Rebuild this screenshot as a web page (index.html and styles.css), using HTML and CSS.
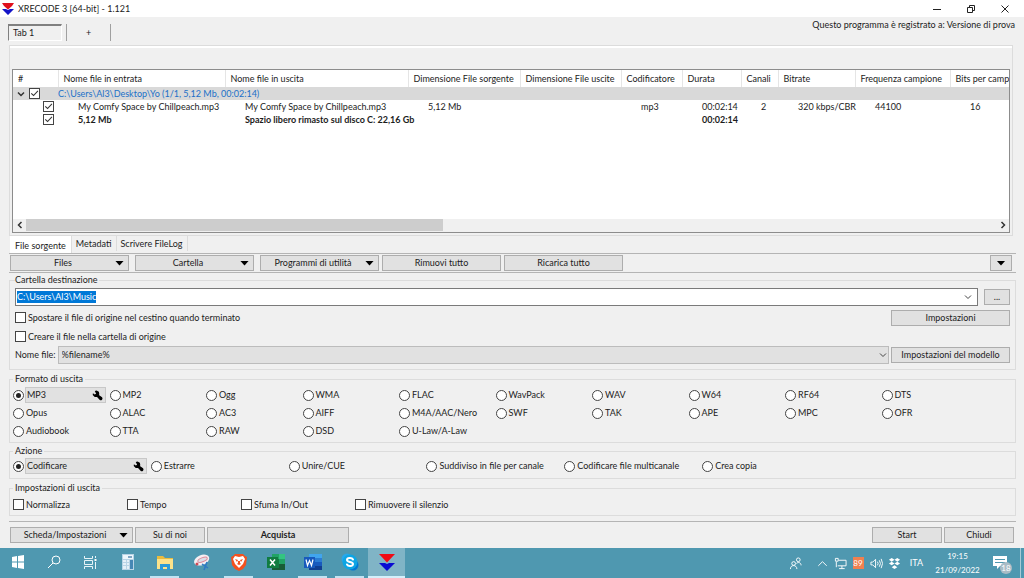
FILE: index.html
```
<!DOCTYPE html>
<html lang="it">
<head>
<meta charset="utf-8">
<title>XRECODE 3 [64-bit] - 1.121</title>
<link rel="stylesheet" href="styles.css">
</head>
<body>
<header class="titlebar">
  <svg class="app-logo" viewBox="0 0 12 12" aria-hidden="true"><path fill="#e0101c" d="M0 0h12L10 3 6 6.500 2 3z"/><path fill="#1414c8" d="M0 6h4l2 1 2-1h4l-6 6z"/></svg>
  <h1 class="title">XRECODE 3 [64-bit] - 1.121</h1>
  <div class="window-controls">
    <button aria-label="Riduci a icona"><svg viewBox="0 0 10 10"><path d="M1 5.500h8"/></svg></button>
    <button aria-label="Ripristina"><svg viewBox="0 0 10 10"><path d="M1.500 3.500h5v5h-5zM3.500 3.500v-2h5v5h-2"/></svg></button>
    <button aria-label="Chiudi finestra"><svg viewBox="0 0 10 10"><path d="M1.500 1.500l7 7M8.500 1.500l-7 7"/></svg></button>
  </div>
</header>

<main class="app">
  <div class="session-bar">
    <button class="session-tab">Tab 1</button>
    <button class="session-add" aria-label="Nuova scheda">+</button>
    <p class="license">Questo programma è registrato a: Versione di prova</p>
  </div>

  <section class="file-panel">
    <div class="file-list">
      <div class="table-clip">
        <table class="files">
          <colgroup><col class="c-num"><col class="c-in"><col class="c-out"><col class="c-src"><col class="c-dst"><col class="c-codec"><col class="c-dur"><col class="c-ch"><col class="c-rate"><col class="c-freq"><col class="c-bits"></colgroup>
          <thead>
            <tr><th>#</th><th>Nome file in entrata</th><th>Nome file in uscita</th><th>Dimensione File sorgente</th><th>Dimensione File uscite</th><th>Codificatore</th><th>Durata</th><th>Canali</th><th>Bitrate</th><th>Frequenza campione</th><th>Bits per camp</th></tr>
          </thead>
          <tbody>
            <tr class="group-row">
              <td class="pick"><span class="pick-line"><svg class="expander" viewBox="0 0 8 8"><path d="M1 2.500l3 3 3-3"/></svg><input type="checkbox" checked aria-label="Seleziona cartella"></span></td>
              <td class="folder" colspan="10">C:\Users\Al3\Desktop\Yo (1/1, 5,12 Mb, 00:02:14)</td>
            </tr>
            <tr>
              <td class="pick"><span class="pick-line nested"><input type="checkbox" checked aria-label="Seleziona file"></span></td>
              <td>My Comfy Space by Chillpeach.mp3</td><td>My Comfy Space by Chillpeach.mp3</td><td>5,12 Mb</td><td></td><td>mp3</td><td>00:02:14</td><td>2</td><td>320 kbps/CBR</td><td>44100</td><td>16</td>
            </tr>
            <tr class="total-row">
              <td class="pick"><span class="pick-line nested"><input type="checkbox" checked aria-label="Seleziona totale"></span></td>
              <td>5,12 Mb</td><td>Spazio libero rimasto sul disco C: 22,16 Gb</td><td></td><td></td><td></td><td>00:02:14</td><td></td><td></td><td></td><td></td>
            </tr>
          </tbody>
        </table>
      </div>
      <div class="scrollbar">
        <button aria-label="Scorri a sinistra"><svg viewBox="0 0 8 8"><path d="M5.500 1l-3 3 3 3"/></svg></button>
        <div class="track"><div class="thumb"></div></div>
        <button aria-label="Scorri a destra"><svg viewBox="0 0 8 8"><path d="M2.500 1l3 3-3 3"/></svg></button>
      </div>
    </div>
  </section>

  <nav class="view-tabs">
    <button class="active">File sorgente</button>
    <button>Metadati</button>
    <button>Scrivere FileLog</button>
  </nav>

  <div class="toolbar">
    <button class="btn drop wide spaced"><span>Files</span><i class="caret"></i></button>
    <button class="btn drop wide spaced"><span>Cartella</span><i class="caret"></i></button>
    <button class="btn drop wide"><span>Programmi di utilità</span><i class="caret"></i></button>
    <button class="btn wide">Rimuovi tutto</button>
    <button class="btn wide">Ricarica tutto</button>
    <button class="btn more" aria-label="Altro"><i class="caret"></i></button>
  </div>

  <fieldset class="group destination">
    <legend>Cartella destinazione</legend>
    <div class="line path-line">
      <div class="combo">
        <input type="text" class="path" value="C:\Users\Al3\Music" aria-label="Cartella destinazione">
        <button aria-label="Mostra cartelle"><svg class="chevron" viewBox="0 0 8 8"><path d="M1 2.500l3 3 3-3"/></svg></button>
      </div>
      <button class="btn browse">...</button>
    </div>
    <div class="line">
      <label class="choice"><input type="checkbox">Spostare il file di origine nel cestino quando terminato</label>
      <button class="btn wide push">Impostazioni</button>
    </div>
    <div class="line">
      <label class="choice"><input type="checkbox">Creare il file nella cartella di origine</label>
    </div>
    <div class="line name-line">
      <label for="filename">Nome file:</label>
      <div class="select-box">
        <select id="filename"><option>%filename%</option></select>
        <svg class="chevron" viewBox="0 0 8 8"><path d="M1 2.500l3 3 3-3"/></svg>
      </div>
      <button class="btn wide">Impostazioni del modello</button>
    </div>
  </fieldset>

  <fieldset class="group formats">
    <legend>Formato di uscita</legend>
    <div class="format-grid">
      <div class="configurable"><input type="radio" name="format" id="mp3" checked><span class="config"><label for="mp3">MP3</label><button aria-label="Configura MP3"><svg viewBox="0 0 12 12"><path d="M3 1l2-.5 2.500 1.500.5 2.500-.5 1 3.500 2.500a2 2 0 0 1-2.500 3L5.500 7.500 3 7.500.8 5.500 1 3.500l2 1.500 1.500-1z"/></svg></button></span></div>
      <label class="choice"><input type="radio" name="format">MP2</label>
      <label class="choice"><input type="radio" name="format">Ogg</label>
      <label class="choice"><input type="radio" name="format">WMA</label>
      <label class="choice"><input type="radio" name="format">FLAC</label>
      <label class="choice"><input type="radio" name="format">WavPack</label>
      <label class="choice"><input type="radio" name="format">WAV</label>
      <label class="choice"><input type="radio" name="format">W64</label>
      <label class="choice"><input type="radio" name="format">RF64</label>
      <label class="choice"><input type="radio" name="format">DTS</label>
      <label class="choice"><input type="radio" name="format">Opus</label>
      <label class="choice"><input type="radio" name="format">ALAC</label>
      <label class="choice"><input type="radio" name="format">AC3</label>
      <label class="choice"><input type="radio" name="format">AIFF</label>
      <label class="choice"><input type="radio" name="format">M4A/AAC/Nero</label>
      <label class="choice"><input type="radio" name="format">SWF</label>
      <label class="choice"><input type="radio" name="format">TAK</label>
      <label class="choice"><input type="radio" name="format">APE</label>
      <label class="choice"><input type="radio" name="format">MPC</label>
      <label class="choice"><input type="radio" name="format">OFR</label>
      <label class="choice"><input type="radio" name="format">Audiobook</label>
      <label class="choice"><input type="radio" name="format">TTA</label>
      <label class="choice"><input type="radio" name="format">RAW</label>
      <label class="choice"><input type="radio" name="format">DSD</label>
      <label class="choice"><input type="radio" name="format">U-Law/A-Law</label>
    </div>
  </fieldset>

  <fieldset class="group actions">
    <legend>Azione</legend>
    <div class="action-grid">
      <div class="configurable"><input type="radio" name="action" id="encode" checked><span class="config"><label for="encode">Codificare</label><button aria-label="Configura codifica"><svg viewBox="0 0 12 12"><path d="M3 1l2-.5 2.500 1.500.5 2.500-.5 1 3.500 2.500a2 2 0 0 1-2.500 3L5.500 7.500 3 7.500.8 5.500 1 3.500l2 1.500 1.500-1z"/></svg></button></span></div>
      <label class="choice"><input type="radio" name="action">Estrarre</label>
      <label class="choice"><input type="radio" name="action">Unire/CUE</label>
      <label class="choice"><input type="radio" name="action">Suddiviso in file per canale</label>
      <label class="choice"><input type="radio" name="action">Codificare file multicanale</label>
      <label class="choice"><input type="radio" name="action">Crea copia</label>
    </div>
  </fieldset>

  <fieldset class="group output">
    <legend>Impostazioni di uscita</legend>
    <div class="output-grid">
      <label class="choice"><input type="checkbox">Normalizza</label>
      <label class="choice"><input type="checkbox">Tempo</label>
      <label class="choice"><input type="checkbox">Sfuma In/Out</label>
      <label class="choice"><input type="checkbox">Rimuovere il silenzio</label>
    </div>
  </fieldset>

  <footer class="bottom-bar">
    <button class="btn drop card"><span>Scheda/Impostazioni</span><i class="caret"></i></button>
    <button class="btn small">Su di noi</button>
    <button class="btn buy">Acquista</button>
    <button class="btn small push">Start</button>
    <button class="btn small">Chiudi</button>
  </footer>
</main>

<div class="taskbar">
  <div class="launchers">
    <button class="sys" aria-label="Start di Windows"><svg viewBox="0 0 20 20"><path fill="#fff" d="M4 5l5-1v5.500H4zM10 4l6-1v6.500h-6zM4 10.500h5V16l-5-1zM10 10.500h6V17l-6-1z"/></svg></button>
    <button class="sys" aria-label="Cerca"><svg viewBox="0 0 20 20"><g fill="none" stroke="#fff"><circle cx="12" cy="8" r="4"/><path d="M9 11l-5 5"/></g></svg></button>
    <button class="sys" aria-label="Visualizzazione attività"><svg viewBox="0 0 20 20"><path fill="none" stroke="#e8f4f8" d="M4.500 4v2.500h8V4M4.500 8.500h8v4h-8zM4.500 17v-2.500h8V17M15.500 4v2M15.500 10v7"/><path fill="#fff" d="M14.500 7h2v2h-2z"/></svg></button>
    <button aria-label="Calcolatrice"><svg viewBox="0 0 20 20"><path fill="#b8d4e6" d="M4 2h12v16H4z"/><path fill="#eef7fc" d="M5 3h10v4H5z"/><path fill="#7fa6c4" d="M10 4h4v2h-4z"/><path fill="#e4f0f8" d="M5 8h3v2H5zM9 8h2v2H9zM5 11h3v2H5zM9 11h2v2H9zM5 14h3v3H5zM9 14h2v3H9z"/><path fill="#4687b4" d="M12 8h3v9h-3z"/></svg></button>
    <button class="open" aria-label="Esplora file"><svg viewBox="0 0 20 20"><path fill="#e9bb3f" d="M2 4h6l2 2h8v11H2z"/><path fill="#fbe28a" d="M2 7h16v10H2z"/><path fill="#2b9bd7" d="M5 18v-6h10v6h-3v-3H8v3z"/></svg></button>
    <button aria-label="Strumento di cattura"><svg viewBox="0 0 20 20"><g transform="rotate(-22 10 9)"><ellipse cx="10" cy="8" rx="8" ry="5" fill="#f5eef2"/><ellipse cx="11" cy="8" rx="5" ry="2" fill="#d9dfe8" stroke="#dd8b9a"/></g><path fill="none" stroke="#2f79c4" stroke-width="1.500" d="M10 12l6 4M15 10l-3 8"/><circle cx="5" cy="12" r="1.500" fill="#cf4b55"/></svg></button>
    <button class="open" aria-label="Brave"><svg viewBox="0 0 20 20"><path fill="#f4511e" d="M6 2h8l2 2 2 1-1 8-3 4-4 2-4-2-3-4-1-8 2-1z"/><path fill="#fff" d="M6 4l4 1 4-1 2 3-2 5-4 4-4-4-2-5z"/><path fill="#f4511e" d="M6 7l3 1-1 2zM14 7l-3 1 1 2zM9 9h2v2l1 1-2 1-2-1 1-1z"/></svg></button>
    <button aria-label="Excel"><svg viewBox="0 0 20 20"><path fill="#21a366" d="M6 2h13v16H6z"/><path fill="#107c41" d="M6 7h7v11H6z"/><path fill="#33c481" d="M13 2h6v5h-6z"/><path fill="#185c37" d="M13 12h6v6H6v-2h7z"/><path fill="#107c41" d="M1 5h11v11H1z"/><path stroke="#fff" stroke-width="1.500" d="M4 7.500l5 6M9 7.500l-5 6"/></svg></button>
    <button class="open" aria-label="Word"><svg viewBox="0 0 20 20"><path fill="#41a5ee" d="M6 2h13v4H6z"/><path fill="#2b7cd3" d="M6 6h13v4H6z"/><path fill="#185abd" d="M6 10h13v4H6z"/><path fill="#103f91" d="M6 14h13v4H6z"/><path fill="#185abd" d="M1 5h11v11H1z"/><path fill="none" stroke="#fff" stroke-width="1.200" d="M3 7.500l1.500 6 2-5 2 5 1.500-6"/></svg></button>
    <button class="open" aria-label="Skype"><svg viewBox="0 0 20 20"><circle cx="7" cy="7" r="5.500" fill="#28a8ea"/><circle cx="13" cy="13" r="5.500" fill="#0078d4"/><circle cx="10" cy="10" r="7.500" fill="#0ea5e4"/><path fill="none" stroke="#fff" stroke-width="2" stroke-linecap="round" d="M13 7.500C12 5.500 7 5.500 7 8c0 2.500 6 1.500 6 4 0 2.500-5 2.500-6 .5"/></svg></button>
    <button class="open current" aria-label="XRECODE 3"><svg viewBox="0 0 20 20"><path fill="#f00a14" d="M2 2h16l-8 8.500z"/><path fill="#0a0ad2" d="M2 11h6l2 1 2-1h6l-8 8z"/></svg></button>
  </div>
  <div class="tray">
    <button class="people" aria-label="Contatti"><svg viewBox="0 0 14 14"><g fill="none" stroke="#fff"><circle cx="5" cy="7" r="2"/><path d="M1.500 13c0-5 7-5 7 0"/><circle cx="10" cy="3" r="2"/><path d="M8 7c2-2 5-1 5 2"/></g></svg></button>
    <button aria-label="Icone nascoste"><svg viewBox="0 0 14 14"><path fill="none" stroke="#fff" d="M2.500 9.500l4.500-4.500 4.500 4.500"/></svg></button>
    <button aria-label="Rete"><svg viewBox="0 0 14 14"><path fill="none" stroke="#fff" d="M5 3.500h8v6H4M8.500 9.500v3M5.500 12.500h6M1.500 1.500h3v3h-3zM2.500 5v6"/></svg></button>
    <button aria-label="Notifiche app"><span class="count">89</span></button>
    <button aria-label="Volume"><svg viewBox="0 0 14 14"><path fill="none" stroke="#fff" d="M1 5.500h2l3-3v9l-3-3H1zM8 5q1.500 2 0 4M10 3.500q2.500 3.500 0 7M12 2q3 5 0 10"/></svg></button>
    <button aria-label="Dropbox"><svg viewBox="0 0 14 14"><path fill="#fff" d="M4 1l3 2-3 2-3-2zM10 1l3 2-3 2-3-2zM4 5l3 2-3 2-3-2zM10 5l3 2-3 2-3-2zM7 9l3 2-3 2-3-2z"/></svg></button>
    <button class="lang">ITA</button>
    <button class="clock"><span>19:15</span><span>21/09/2022</span></button>
    <button class="notify" aria-label="Centro notifiche"><svg viewBox="0 0 14 14"><path fill="#fff" d="M0 0h14v10H7l-3 3v-3H0z"/><path stroke="#4f98b0" d="M2 3.500h10M2 6.500h10"/></svg><span class="badge">18</span></button>
    <button class="peek" aria-label="Mostra desktop"></button>
  </div>
</div>
</body>
</html>
```
FILE: styles.css
```
:root {
  --face: #f0f0f0;
  --button: #e1e1e1;
  --line: #adadad;
  --soft-line: #dcdcdc;
  --ink: #1c1c1c;
  --taskbar: #4f98b0;
}

* { box-sizing: border-box; }

body {
  margin: 0;
  min-height: 100vh;
  display: flex;
  flex-direction: column;
  background: var(--face);
  color: var(--ink);
  font: 9px/12px Lato, "Open Sans", sans-serif;
}

button, input, select { font: inherit; color: inherit; margin: 0; }
button { padding: 0; border: 0; background: none; white-space: nowrap; }
svg { display: block; }

/* Title bar */
.titlebar { display: flex; align-items: center; height: 17px; padding: 0 2px; background: #fff; }
.app-logo { width: 12px; height: 12px; }
.title { margin: 0 0 0 4px; font-size: 9px; font-weight: 400; }
.window-controls { display: flex; margin-left: auto; }
.window-controls button { width: 34px; height: 16px; display: grid; place-items: center; }
.window-controls svg { width: 10px; height: 10px; fill: none; stroke: #222; }

/* Main area */
.app { flex: 1; display: flex; flex-direction: column; padding: 0 9px; }

.session-bar { display: flex; align-items: flex-start; height: 28px; padding-top: 7px; margin-left: -1px; }
.session-tab {
  width: 54px; height: 17px; padding-left: 4px; text-align: left;
  border: 1px solid #fff; border-top: 2px solid #808080; border-left: 1px solid #808080;
}
.session-add { width: 45px; height: 17px; margin-left: 4px; border: solid #a0a0a0; border-width: 0 1px; }
.license { margin: -5px 0 0 auto; }

.file-panel { margin-right: 2px; padding: 2px; border: 1px solid var(--soft-line); background: linear-gradient(#fff, #fff) top / 100% 2px no-repeat; }
.file-list { margin-top: 21px; border: 1px solid #8c8c8c; background: #fff; }
.table-clip { height: 149px; overflow: hidden; }
.files { width: 1086px; table-layout: fixed; border-collapse: collapse; white-space: nowrap; }
.c-num { width: 45px; }
.c-in { width: 167px; }
.c-out { width: 183px; }
.c-src { width: 112px; }
.c-dst { width: 101px; }
.c-codec { width: 61px; }
.c-dur { width: 59px; }
.c-ch { width: 37px; }
.c-rate { width: 77px; }
.c-freq { width: 95px; }
.c-bits { width: 149px; }
.files th { height: 17px; padding: 0 0 0 5px; border-right: 1px solid #e5e5e5; text-align: left; font-weight: 400; }
.files td { height: 13px; padding: 0 0 0 20px; line-height: 13px; overflow: visible; }
.files .pick { padding: 0; }
.files .folder { padding-left: 0; color: #2070c8; }
.group-row { background: #d9d9d9; }
.total-row { font-weight: 700; }
.pick-line { display: flex; align-items: center; gap: 4px; padding-left: 4px; }
.pick-line.nested { padding-left: 30px; }
.expander { width: 8px; height: 8px; fill: none; stroke: #333; stroke-width: 1.5; }

.scrollbar { display: flex; height: 13px; padding-bottom: 1px; background: var(--face); }
.scrollbar button { width: 13px; display: grid; place-items: center; }
.scrollbar svg { width: 8px; height: 8px; fill: none; stroke: #333; stroke-width: 1.5; }
.track { flex: 1; }
.thumb { width: 43%; height: 12px; background: #cdcdcd; }

.view-tabs { display: flex; align-items: flex-start; height: 17px; padding-left: 1px; }
.view-tabs button { height: 15px; padding: 0 4px; border: 1px solid var(--soft-line); border-width: 0 1px 0 0; }
.view-tabs .active { height: 17px; padding: 2px 5px 0; background: #fff; }

/* Buttons */
.btn { height: 16px; border: 1px solid var(--line); background: var(--button); text-align: center; }
.wide { width: 119px; }
.small { width: 70px; }
.push { margin-left: auto; }
.drop { display: flex; align-items: center; padding-right: 4px; }
.drop span { flex: 1; }
.caret { display: block; width: 9px; height: 5px; background: #000; clip-path: polygon(0 0, 100% 0, 50% 100%); }

.toolbar {
  display: flex; align-items: center; gap: 3px; height: 20px; margin-right: -1px; padding: 0 4px 0 1px;
  border: solid #b4b4b4; border-width: 1px 0;
}
.spaced { margin-right: 3px; }
.more { width: 22px; margin-left: auto; display: grid; place-items: center; }

/* Option groups */
.group { min-width: 0; margin: 1px -1px 0 0; padding: 0 5px; border: 1px solid var(--soft-line); }
.group legend { height: 12px; padding: 0 2px; }
.destination { padding-bottom: 5px; }
.destination legend { padding: 0 1px 0 0; }
.line { display: flex; align-items: center; height: 19px; }
.path-line { height: 22px; gap: 6px; }
.combo { flex: 1; display: flex; align-items: center; height: 18px; border: 1px solid #7a7a7a; background: #fff; }
.path { field-sizing: content; height: 12px; margin-left: 1px; padding: 0; border: 0; outline: 0; background: #0078d7; color: #fff; }
.combo button { margin-left: auto; width: 13px; }
.chevron { width: 8px; height: 8px; fill: none; stroke: #444; }
.browse { width: 26px; }
.name-line { gap: 2px; height: 18px; }
.select-box { flex: 1; display: grid; align-items: center; }
.select-box > * { grid-area: 1 / 1; }
.select-box select { appearance: none; width: 100%; height: 18px; padding: 0 3px; border: 1px solid #bcbcbc; border-radius: 0; background: var(--button); }
.select-box .chevron { justify-self: end; margin-right: 2px; pointer-events: none; }

.choice { display: flex; align-items: center; gap: 2px; white-space: nowrap; }

input[type="checkbox"], input[type="radio"] {
  appearance: none; flex: none; width: 11px; height: 11px; display: grid; place-items: center;
  border: 1px solid #444; background: #fff;
}
input[type="radio"] { border-radius: 50%; }
input[type="radio"]:checked::before { content: ""; width: 5px; height: 5px; border-radius: 50%; background: #222; }
input[type="checkbox"]:checked::before {
  content: ""; width: 9px; height: 9px; background: #333;
  clip-path: polygon(10% 52%, 18% 44%, 40% 64%, 84% 18%, 92% 26%, 40% 80%);
}

.configurable { display: flex; align-items: center; gap: 1px; }
.config { flex: 1; display: flex; align-items: center; justify-content: space-between; height: 16px; margin-right: 4px; padding: 0 2px 0 1px; border: 1px solid #c8c8c8; background: var(--button); }
.config svg { width: 11px; height: 11px; fill: #000; }

.formats, .actions, .output { padding-left: 3px; }
.formats { margin-top: 3px; }
.format-grid { display: grid; grid-template-columns: repeat(10, 1fr); grid-auto-rows: 18px; margin-right: 32px; padding: 1px 0 2px; }
.actions { margin-top: 2px; }
.action-grid { display: grid; grid-template-columns: repeat(6, 1fr); grid-auto-rows: 18px; margin-right: 170px; padding-bottom: 3px; }
.output { margin-top: 3px; }
.output-grid { display: flex; height: 21px; }
.output-grid .choice { width: 114px; }

.bottom-bar { display: flex; align-items: flex-start; gap: 2px; margin-top: 5px; margin-right: -1px; padding: 5px 2px 5px 1px; border-top: 1px solid #b4b4b4; }
.card { width: 123px; }
.buy { width: 142px; font-weight: 700; }

/* Taskbar */
.taskbar { display: flex; justify-content: space-between; height: 30px; background: var(--taskbar); color: #fff; }
.launchers, .tray { display: flex; }
.launchers button { width: 37px; height: 30px; display: grid; place-items: center; border-bottom: 2px solid transparent; }
.launchers .sys { width: 36px; }
.launchers .sys:nth-child(3) { margin-right: 1px; }
.launchers svg { width: 20px; height: 20px; }
.launchers .open { background: linear-gradient(#c2e3f2, #c2e3f2) bottom / 29px 2px no-repeat border-box; }
.launchers .current { background: linear-gradient(#d4f0fb, #d4f0fb) bottom / 100% 2px no-repeat border-box, #80b4c6; }
.tray button { width: 18px; height: 30px; display: grid; place-items: center; }
.tray svg { width: 13px; height: 13px; }
.tray .people { width: 36px; }
.tray .count { width: 11px; height: 12px; background: #f08050; font-size: 8px; }
.tray .lang { width: 27px; }
.tray .clock { width: 55px; align-content: center; row-gap: 2px; font-size: 8px; }
.tray .notify { position: relative; width: 35px; padding-right: 6px; }
.tray .notify svg { width: 14px; height: 14px; }
.badge { position: absolute; right: 8px; bottom: 4px; width: 12px; height: 12px; border-radius: 50%; background: #a9bcc6; font-size: 8px; }
.tray .peek { width: 4px; border-left: 1px solid #a5cbd8; }
```
